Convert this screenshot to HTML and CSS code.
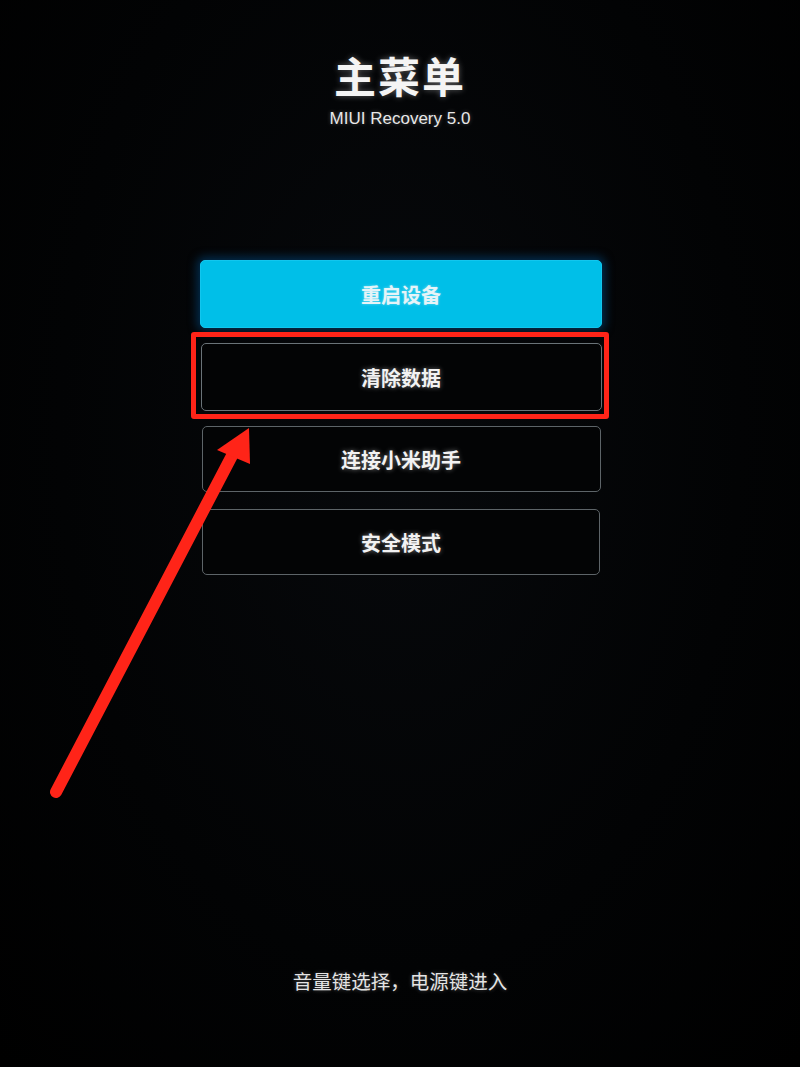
FILE: index.html
```html
<!DOCTYPE html>
<html lang="zh">
<head>
<meta charset="utf-8">
<title>主菜单</title>
<link rel="stylesheet" href="styles.css">
</head>
<body>
<div class="screen">
  <header class="head">
    <h1 class="title">主菜单</h1>
    <div class="sub">MIUI Recovery 5.0</div>
  </header>
  <nav class="menu">
    <div class="item primary w1">重启设备</div>
    <div class="item w2 marked">清除数据</div>
    <div class="item w3">连接小米助手</div>
    <div class="item w4">安全模式</div>
  </nav>
  <div class="spacer"></div>
  <footer class="hint">音量键选择，电源键进入</footer>
  <svg class="arrow" width="800" height="1067" viewBox="0 0 800 1067">
    <line x1="56" y1="792" x2="236" y2="448" stroke="#ff2418" stroke-width="12" stroke-linecap="round"/>
    <polygon points="249,428 217,450 250,464" fill="#ff2418"/>
  </svg>
</div>
</body>
</html>
```
FILE: styles.css
```css
html, body {
  margin: 0;
  padding: 0;
  background: #000;
}
.screen {
  position: relative;
  width: 800px;
  height: 1067px;
  overflow: hidden;
  display: flex;
  flex-direction: column;
  align-items: center;
  background: radial-gradient(ellipse at 50% 40%, #07090c 0%, #020304 60%, #000 100%);
  font-family: "Noto Sans CJK SC", "Liberation Sans", sans-serif;
  color: #f2f2f2;
}
.head {
  display: flex;
  flex-direction: column;
  align-items: center;
  padding-top: 47px;
}
.title {
  margin: 0;
  font-size: 42px;
  line-height: 56px;
  font-weight: 700;
  letter-spacing: 2px;
  color: #f4f4f4;
  text-shadow: 0 0 6px rgba(255,255,255,0.35);
}
.sub {
  margin-top: 5px;
  font-family: "Liberation Sans", "Noto Sans", sans-serif;
  font-size: 17px;
  line-height: 22px;
  color: #e8e8e8;
  text-shadow: 0 0 4px rgba(255,255,255,0.3);
}
.menu {
  margin-top: 130px;
  display: flex;
  flex-direction: column;
  align-items: center;
  gap: 15px;
  padding-left: 2px;
}
.item {
  box-sizing: border-box;
  display: flex;
  align-items: center;
  justify-content: center;
  height: 68px;
  border: 1.5px solid #5d6468;
  border-radius: 5px;
  background: #030405;
  font-size: 20px;
  font-weight: 700;
  color: #f2f2f2;
  text-shadow: 0 0 5px rgba(255,255,255,0.45);
}
.primary {
  background: #00bfe8;
  border-color: #12c6ee;
  color: #e6f4f8;
  text-shadow: 0 0 3px rgba(255,255,255,0.4);
  box-shadow: 0 0 10px 3px rgba(0,80,140,0.55);
}
.w1 { width: 402px; }
.w2 { width: 401px; }
.w3 { width: 399px; height: 66px; }
.w4 { width: 398px; height: 66px; margin-top: 2px; }
.marked {
  position: relative;
  border-color: #6a7378;
}
.marked::after {
  content: "";
  position: absolute;
  left: -11px;
  top: -12px;
  right: -8px;
  bottom: -9px;
  border: 5px solid #ff2418;
  border-radius: 3px;
}
.spacer {
  flex: 1;
}
.hint {
  margin-bottom: 72px;
  font-size: 19.5px;
  line-height: 28px;
  color: #e4e4e4;
  text-shadow: 0 0 4px rgba(255,255,255,0.3);
}
.arrow {
  position: absolute;
  left: 0;
  top: 0;
  pointer-events: none;
}
```
